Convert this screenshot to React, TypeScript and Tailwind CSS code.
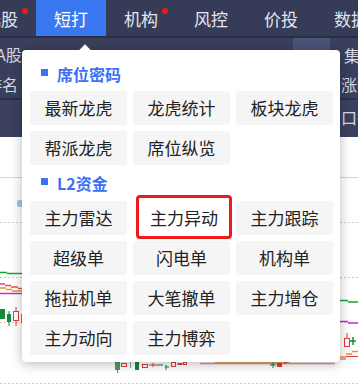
import React from "react";

const font = "font-['Noto_Sans_CJK_SC','Noto_Sans',sans-serif]";

const tabs = [
  { label: "选股", dot: true },
  { label: "短打", active: true },
  { label: "机构", dot: true },
  { label: "风控" },
  { label: "价投" },
  { label: "数据" },
];

const seatItems = ["最新龙虎", "龙虎统计", "板块龙虎", "帮派龙虎", "席位纵览"];
const l2Items = [
  "主力雷达",
  "主力异动",
  "主力跟踪",
  "超级单",
  "闪电单",
  "机构单",
  "拖拉机单",
  "大笔撤单",
  "主力增仓",
  "主力动向",
  "主力博弈",
];

function SectionTitle({ title, className }: { title: string; className: string }) {
  return (
    <div className={`flex items-center gap-[9px] pl-[11px] ${className}`}>
      <span className="mb-[3px] h-[7px] w-[7px] bg-[#3b74f0]" />
      <span className="text-[16px] font-bold leading-none text-[#3b6ff5]">{title}</span>
    </div>
  );
}

function MenuButton({ label, marked }: { label: string; marked?: boolean }) {
  if (marked) {
    return (
      <div className="relative h-[34px]">
        <div className="absolute -bottom-[4px] -right-[2px] -top-[6px] left-[3px] flex items-center justify-center rounded-[4px] border-[3px] border-[#ee1b1b] bg-white pt-[1px] text-[17px] text-[#222]">
          {label}
        </div>
      </div>
    );
  }
  return (
    <div className="flex h-[34px] items-center justify-center rounded-[3px] bg-[#f5f5f5] text-[17px] text-[#222]">
      {label}
    </div>
  );
}

function Chart() {
  return (
    <svg width="358" height="251" viewBox="0 137 358 251" className="block">
      <line x1="0" y1="177.5" x2="358" y2="177.5" stroke="#d6d6d6" />
      {[222.5, 277.5, 322.5, 383.5].map((y) => (
        <line key={y} x1="0" y1={y} x2="358" y2={y} stroke="#c9c9c9" strokeDasharray="2 2" />
      ))}
      <rect x="17" y="200" width="6" height="7" rx="2" fill="#a9c3ee" />
      {/* left edge */}
      <path d="M0 272.5H7M7 273.5H24" stroke="#17a333" strokeWidth="1.5" />
      <path d="M0 284H5M5 285.5H11M11 287H18M18 288.5H24" stroke="#e84b4b" strokeWidth="1.5" />
      <path d="M0 288H6M6 289.5H12M12 291H24" stroke="#e39528" strokeWidth="1.5" />
      <path d="M0 293.5H24" stroke="#dc22d0" strokeWidth="1.5" />
      <rect x="0" y="309" width="5" height="10" fill="#17893a" />
      <line x1="9" y1="311" x2="9" y2="326" stroke="#17893a" />
      <rect x="7" y="314" width="4" height="8" fill="#17893a" />
      <line x1="16" y1="307" x2="16" y2="326" stroke="#e8383d" />
      <rect x="13.5" y="311.5" width="5" height="9" fill="#fff" stroke="#e8383d" />
      <rect x="21" y="314" width="3" height="9" fill="#5aa36a" />
      {/* right edge */}
      <path d="M336 300.5H348M348 302H358" stroke="#17a333" strokeWidth="1.5" />
      <path d="M336 321.5H348M348 323H358" stroke="#dc22d0" strokeWidth="1.5" />
      <line x1="347" y1="333" x2="347" y2="346" stroke="#e8383d" />
      <rect x="344.5" y="338.5" width="5" height="8" fill="#fff" stroke="#e8383d" />
      <path d="M353 337V345M350 341H356" stroke="#17893a" strokeWidth="1.5" />
      <path d="M336 357H346M346 354H352M352 351.5H358" stroke="#e39528" strokeWidth="1.5" />
      <path d="M336 359H346M346 356.5H358" stroke="#e8383d" strokeWidth="1" />
      {/* under popup */}
      <path d="M200 363.5H335" stroke="#e9908a" strokeWidth="1.5" />
      <path d="M215 362.5H290" stroke="#e0a060" strokeWidth="1" />
      <rect x="115" y="362" width="5" height="8" fill="#4a9d5c" />
      <line x1="117.5" y1="362" x2="117.5" y2="373" stroke="#4a9d5c" />
      <rect x="121.5" y="363.5" width="5" height="3" fill="#fff" stroke="#e8383d" />
      <line x1="130.5" y1="362" x2="130.5" y2="368" stroke="#999" />
      <rect x="135" y="362" width="4" height="8" fill="#17893a" />
      <rect x="142.5" y="364.5" width="5" height="3" fill="#fff" stroke="#e8383d" />
      <path d="M149 365H157M153 363V367" stroke="#e8383d" />
      <path d="M157 365H163M165 367H169M166 365V370" stroke="#17893a" />
      <rect x="171.5" y="362.5" width="4" height="4" fill="#fff" stroke="#e8383d" />
      <rect x="177.5" y="363" width="5" height="2" fill="#e8383d" />
      <rect x="183.5" y="362.5" width="3" height="2" fill="#fff" stroke="#e8383d" />
      <path d="M270 365H276M273 362V368" stroke="#17893a" />
      <rect x="277" y="363" width="5" height="4" fill="#e8383d" />
      <path d="M284 362L285 364L287 362" stroke="#e8383d" fill="none" />
    </svg>
  );
}

export default function App() {
  return (
    <div className={`relative h-[388px] w-[358px] overflow-hidden bg-white ${font}`}>
      <nav className="flex h-9 bg-[#363b57] text-[17px] leading-none">
        <div className="-ml-[34px] flex">
          {tabs.map((t) => (
            <div
              key={t.label}
              className={`relative flex w-[70px] shrink-0 items-center justify-center ${
                t.active ? "bg-[#3a78f2] text-white" : "text-[#e3e6f0]"
              }`}
            >
              <span className="relative">
                {t.label}
                {t.dot && (
                  <span className="absolute -right-[10px] -top-[2px] h-[6px] w-[6px] rounded-full bg-[#f01818]" />
                )}
              </span>
            </div>
          ))}
        </div>
      </nav>

      <div className="border-t-2 border-[#2a2e44] bg-[#3a3f5c] text-[16px] leading-none text-[#d6d9e6]">
        <div className="flex h-[32px] items-center justify-between">
          <span className="-ml-[4px]">A股</span>
          <div className="flex items-center">
            <span className="mr-[14px] h-[32px] w-[37px] bg-[#4b5377]" />
            <span className="-mr-[18px] pt-[2px]">集合</span>
          </div>
        </div>
        <div className="flex h-[28px] items-center justify-between">
          <span className="-ml-[14px]">排名</span>
          <span className="-mr-[15px]">涨幅</span>
        </div>
        <div className="flex h-[39px] items-center justify-between border-t-2 border-[#2c3048] bg-[#3b405e]">
          <span />
          <span className="-mr-[15px] pb-[4px]">口径</span>
        </div>
      </div>

      <Chart />

      {/* dropdown */}
      <div className="absolute left-[22px] top-[50px] w-[318px] rounded-[4px] bg-white pb-[7px] pl-[8px] pr-[7px] pt-[6px] shadow-[0_2px_12px_rgba(0,0,0,0.28)]">
        <span className="absolute -top-[4px] left-[59px] h-[8px] w-[8px] rotate-45 bg-white" />
        <SectionTitle title="席位密码" className="h-[35px]" />
        <div className="grid grid-cols-3 gap-[6px]">
          {seatItems.map((s) => (
            <MenuButton key={s} label={s} />
          ))}
        </div>
        <SectionTitle title="L2资金" className="h-[36px]" />
        <div className="grid grid-cols-3 gap-[6px]">
          {l2Items.map((s) => (
            <MenuButton key={s} label={s} marked={s === "主力异动"} />
          ))}
        </div>
      </div>
    </div>
  );
}
